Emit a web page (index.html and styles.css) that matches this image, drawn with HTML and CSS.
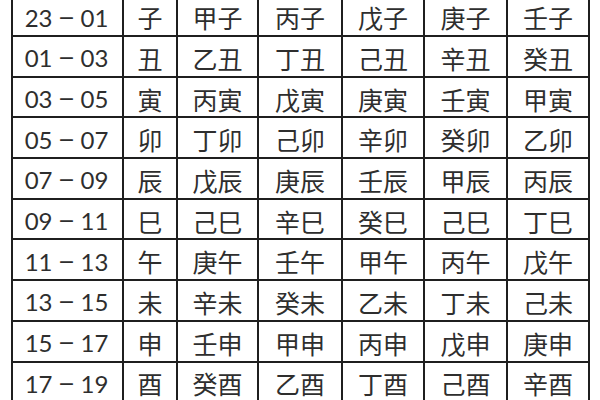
FILE: index.html
```html
<!DOCTYPE html>
<html lang="zh-CN">
<head>
<meta charset="utf-8">
<link rel="stylesheet" href="styles.css">
</head>
<body>
<div class="table">
  <div class="cell time">23<span class="dash">－</span>01</div><div class="cell">子</div><div class="cell">甲子</div><div class="cell">丙子</div><div class="cell">戊子</div><div class="cell">庚子</div><div class="cell">壬子</div>
  <div class="cell time">01<span class="dash">－</span>03</div><div class="cell">丑</div><div class="cell">乙丑</div><div class="cell">丁丑</div><div class="cell">己丑</div><div class="cell">辛丑</div><div class="cell">癸丑</div>
  <div class="cell time">03<span class="dash">－</span>05</div><div class="cell">寅</div><div class="cell">丙寅</div><div class="cell">戊寅</div><div class="cell">庚寅</div><div class="cell">壬寅</div><div class="cell">甲寅</div>
  <div class="cell time">05<span class="dash">－</span>07</div><div class="cell">卯</div><div class="cell">丁卯</div><div class="cell">己卯</div><div class="cell">辛卯</div><div class="cell">癸卯</div><div class="cell">乙卯</div>
  <div class="cell time">07<span class="dash">－</span>09</div><div class="cell">辰</div><div class="cell">戊辰</div><div class="cell">庚辰</div><div class="cell">壬辰</div><div class="cell">甲辰</div><div class="cell">丙辰</div>
  <div class="cell time">09<span class="dash">－</span>11</div><div class="cell">巳</div><div class="cell">己巳</div><div class="cell">辛巳</div><div class="cell">癸巳</div><div class="cell">己巳</div><div class="cell">丁巳</div>
  <div class="cell time">11<span class="dash">－</span>13</div><div class="cell">午</div><div class="cell">庚午</div><div class="cell">壬午</div><div class="cell">甲午</div><div class="cell">丙午</div><div class="cell">戊午</div>
  <div class="cell time">13<span class="dash">－</span>15</div><div class="cell">未</div><div class="cell">辛未</div><div class="cell">癸未</div><div class="cell">乙未</div><div class="cell">丁未</div><div class="cell">己未</div>
  <div class="cell time">15<span class="dash">－</span>17</div><div class="cell">申</div><div class="cell">壬申</div><div class="cell">甲申</div><div class="cell">丙申</div><div class="cell">戊申</div><div class="cell">庚申</div>
  <div class="cell time">17<span class="dash">－</span>19</div><div class="cell">酉</div><div class="cell">癸酉</div><div class="cell">乙酉</div><div class="cell">丁酉</div><div class="cell">己酉</div><div class="cell">辛酉</div>
</div>
</body>
</html>
```

FILE: styles.css
```css
html, body {
  margin: 0;
  padding: 0;
  background: #fff;
  overflow: hidden;
}
body {
  width: 600px;
  height: 400px;
}
.table {
  display: grid;
  width: max-content;
  grid-template-columns: 109px 52px 79px 82px 80px 81px 80px;
  grid-template-rows: repeat(10, 38.7px);
  gap: 2px;
  padding: 2px;
  margin: -5.7px 0 0 11px;
  background: #1f1f1f;
}
.cell {
  background: #fff;
  color: #2e2e2e;
  font-family: "Noto Sans CJK SC", sans-serif;
  font-size: 25px;
  line-height: 1;
  display: flex;
  align-items: center;
  justify-content: center;
  padding-top: 4px;
  box-sizing: border-box;
  white-space: nowrap;
}
.time {
  font-family: Lato, "Noto Sans CJK SC", sans-serif;
  font-size: 24px;
  padding-right: 2px;
}
.dash {
  font-family: "Noto Sans CJK SC", sans-serif;
  font-size: 18px;
  font-weight: 700;
  margin: 0 5px;
  position: relative;
  top: -1px;
}
```
